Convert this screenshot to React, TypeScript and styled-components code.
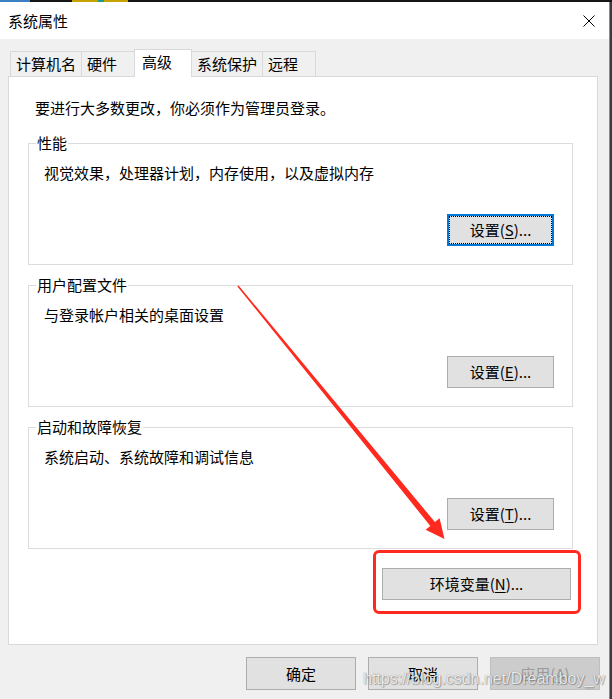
import React from 'react'
import styled, { createGlobalStyle } from 'styled-components'

const GlobalStyle = createGlobalStyle`
  html, body { margin: 0; padding: 0; }
  body {
    background: #3c3c3c;
    font-family: "Noto Sans CJK SC", "Microsoft YaHei", sans-serif;
    color: #000;
  }
  * { box-sizing: border-box; }
`

const Screen = styled.div`
  position: relative;
  width: 612px;
  height: 699px;
  overflow: hidden;
  background: #3c3c3c;
`

const TaskStrip = styled.div`
  display: flex;
  height: 2px;
  background: #161616;
`

const StripSeg = styled.div<{ $w: number; $c: string }>`
  width: ${p => p.$w}px;
  background: ${p => p.$c};
`

const Window = styled.div`
  width: 610px;
  height: 697px;
  border-right: 1px solid #8a8a8a;
  background: #f0f0f0;
`

const TitleBar = styled.div`
  height: 37px;
  background: #fff;
  display: flex;
  align-items: center;
  justify-content: space-between;
  padding: 0 14px 0 8px;
  font-size: 15px;
  line-height: 20px;
`

const Body = styled.div`
  padding: 10px 11px 0 8px;
`

const TabBar = styled.div`
  display: flex;
  align-items: flex-end;
  height: 27px;
  padding-left: 2px;
  position: relative;
  z-index: 1;
`

const Tab = styled.div<{ $active?: boolean }>`
  height: ${p => (p.$active ? 28 : 25)}px;
  min-width: ${p => (p.$active ? 58 : 54)}px;
  margin-left: -1px;
  margin-bottom: ${p => (p.$active ? -1 : 0)}px;
  padding: ${p => (p.$active ? '1px 6px 0 7px' : '0 5px')};
  border: 1px solid #d9d9d9;
  border-bottom: none;
  background: ${p => (p.$active ? '#fff' : '#f0f0f0')};
  font-size: 15px;
  line-height: ${p => (p.$active ? 22 : 24)}px;
  white-space: nowrap;
  position: relative;
  z-index: ${p => (p.$active ? 2 : 1)};
  &:first-child { margin-left: 0; }
`

const Panel = styled.div`
  border: 1px solid #d9d9d9;
  background: #fff;
  padding: 21px 24px 44px 19px;
  display: flex;
  flex-direction: column;
  gap: 10px;
`

const Intro = styled.div`
  margin: 0 0 5px 7px;
  font-size: 15px;
  line-height: 20px;
`

const GroupBox = styled.fieldset`
  margin: 0;
  padding: 0;
  border: 1px solid #dcdcdc;
  min-inline-size: auto;
`

const Legend = styled.legend`
  margin-left: 7px;
  padding: 0 1px;
  font-size: 15px;
  line-height: 20px;
`

const GroupBody = styled.div`
  padding: 10px 18px 18px 15px;
`

const GroupText = styled.div`
  font-size: 15px;
  line-height: 20px;
`

const ButtonRow = styled.div<{ $top: number; $right?: number }>`
  display: flex;
  justify-content: flex-end;
  margin-top: ${p => p.$top}px;
  margin-right: ${p => p.$right ?? 0}px;
`

const Button = styled.button<{ $w: number; $h?: number; $focused?: boolean }>`
  width: ${p => p.$w}px;
  height: ${p => p.$h ?? 32}px;
  margin: 0;
  padding: 0;
  background: #e1e1e1;
  border: ${p => (p.$focused ? '2px solid #0078d7' : '1px solid #adadad')};
  outline: ${p => (p.$focused ? '1px dotted #000' : 'none')};
  outline-offset: -3px;
  font-family: inherit;
  font-size: 15px;
  line-height: 20px;
  color: #000;
  position: relative;

  &:disabled {
    background: #cccccc;
    border-color: #bfbfbf;
    color: #9a9a9a;
  }
  u { text-underline-offset: 2px; }
`

const Highlight = styled.div`
  position: relative;
`

const RedBox = styled.div`
  position: absolute;
  top: -18px;
  left: -9px;
  right: -10px;
  bottom: -14px;
  border: 3px solid #ff2a1f;
  border-radius: 6px;
  pointer-events: none;
`

const Footer = styled.div`
  display: flex;
  justify-content: flex-end;
  gap: 12px;
  margin: 12px -2px 0 0;
`

const Overlay = styled.svg`
  position: absolute;
  top: 0;
  left: 0;
  pointer-events: none;
`

const Watermark = styled.div`
  position: absolute;
  left: 363px;
  top: 668px;
  font-family: "Liberation Sans", Arial, sans-serif;
  font-size: 16px;
  line-height: 22px;
  color: rgba(255, 255, 255, 0.85);
  text-shadow: 0 0 1px rgba(0, 0, 0, 0.45), 1px 1px 1px rgba(0, 0, 0, 0.25);
  white-space: nowrap;
  pointer-events: none;
`

function CloseIcon() {
  return (
    <svg width="12" height="12" viewBox="0 0 12 12">
      <path d="M0.5 0.5 L11.5 11.5 M11.5 0.5 L0.5 11.5" stroke="#000" strokeWidth="1" fill="none" />
    </svg>
  )
}

const groups = [
  { title: '性能', text: '视觉效果，处理器计划，内存使用，以及虚拟内存', key: 'S', focused: true },
  { title: '用户配置文件', text: '与登录帐户相关的桌面设置', key: 'E' },
  { title: '启动和故障恢复', text: '系统启动、系统故障和调试信息', key: 'T' },
]

const tabs = ['计算机名', '硬件', '高级', '系统保护', '远程']

export default function App() {
  return (
    <Screen>
      <GlobalStyle />
      <TaskStrip>
        <StripSeg $w={30} $c="#3a7fc1" />
        <StripSeg $w={42} $c="#161616" />
        <StripSeg $w={26} $c="#c7a300" />
        <StripSeg $w={6} $c="#1f9a8a" />
        <StripSeg $w={24} $c="#c7a300" />
      </TaskStrip>
      <Window>
        <TitleBar>
          <span>系统属性</span>
          <CloseIcon />
        </TitleBar>
        <Body>
          <TabBar>
            {tabs.map(t => (
              <Tab key={t} $active={t === '高级'}>{t}</Tab>
            ))}
          </TabBar>
          <Panel>
            <Intro>要进行大多数更改，你必须作为管理员登录。</Intro>
            {groups.map(g => (
              <GroupBox key={g.title}>
                <Legend>{g.title}</Legend>
                <GroupBody>
                  <GroupText>{g.text}</GroupText>
                  <ButtonRow $top={31}>
                    <Button $w={107} $focused={g.focused}>
                      设置(<u>{g.key}</u>)...
                    </Button>
                  </ButtonRow>
                </GroupBody>
              </GroupBox>
            ))}
            <ButtonRow $top={9} $right={2}>
              <Highlight>
                <Button $w={189}>环境变量(<u>N</u>)...</Button>
                <RedBox />
              </Highlight>
            </ButtonRow>
          </Panel>
          <Footer>
            <Button $w={110} $h={33}>确定</Button>
            <Button $w={110} $h={33}>取消</Button>
            <Button $w={110} $h={33} disabled>应用(<u>A</u>)</Button>
          </Footer>
        </Body>
      </Window>
      <Overlay width="612" height="699" viewBox="0 0 612 699">
        <polygon
          fill="#ff2a1f"
          points="238.6,285.5 434.9,522.1 439.6,518.3 444.5,539 425.6,529.7 430.3,525.9 237.4,286.5"
        />
      </Overlay>
      <Watermark>https://blog.csdn.net/Dreamboy_w</Watermark>
    </Screen>
  )
}
